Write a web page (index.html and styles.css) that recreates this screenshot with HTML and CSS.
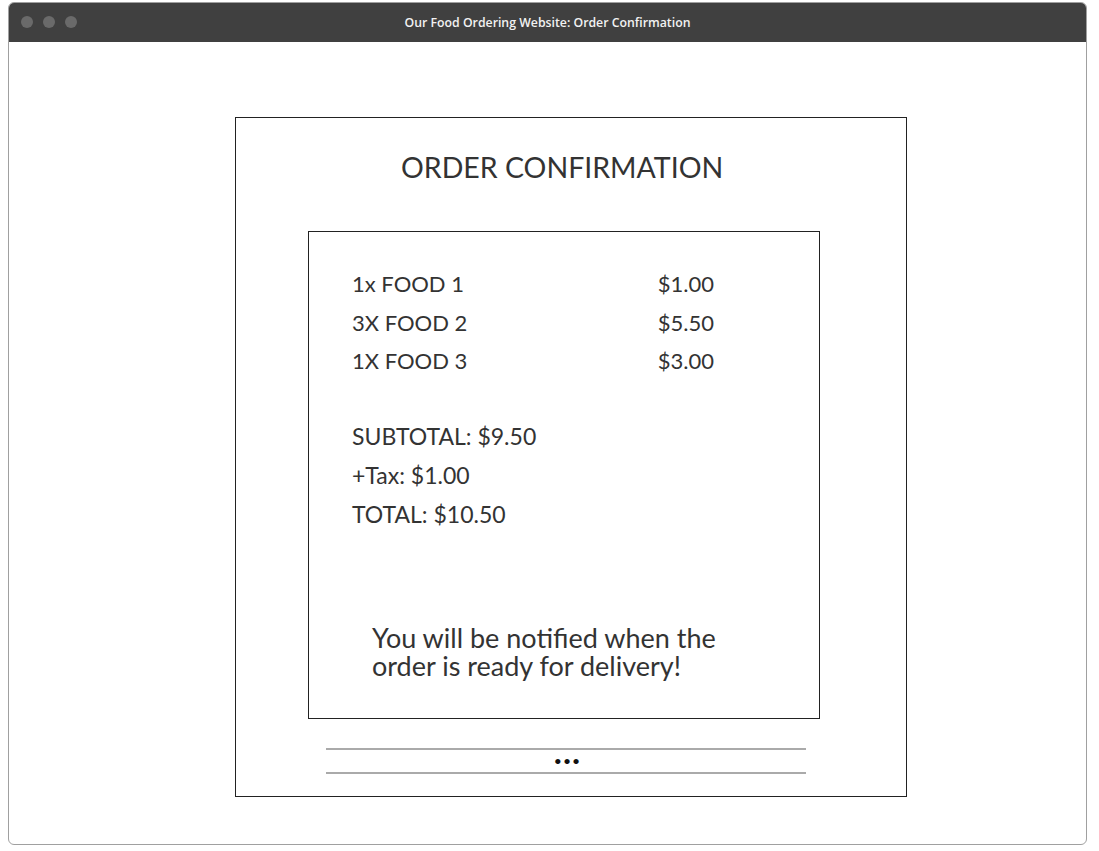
FILE: index.html
```html
<!DOCTYPE html>
<html>
<head>
<meta charset="utf-8">
<link rel="stylesheet" href="styles.css">
</head>
<body>
<div class="window">
  <div class="titlebar">
    <div class="dots"><span></span><span></span><span></span></div>
    <div class="title">Our Food Ordering Website: Order Confirmation</div>
  </div>
  <div class="content">
    <div class="outer">
      <h1 class="heading">ORDER CONFIRMATION</h1>
      <div class="inner">
        <div class="items">
          <div class="row"><span>1x FOOD 1</span><span>$1.00</span></div>
          <div class="row"><span>3X FOOD 2</span><span>$5.50</span></div>
          <div class="row"><span>1X FOOD 3</span><span>$3.00</span></div>
        </div>
        <div class="summary">
          <div class="line">SUBTOTAL: $9.50</div>
          <div class="line">+Tax: $1.00</div>
          <div class="line">TOTAL: $10.50</div>
        </div>
        <p class="message">You will be notified when the<br>order is ready for delivery!</p>
      </div>
      <div class="pager"><span class="more">&bull;&bull;&bull;</span></div>
    </div>
  </div>
</div>
</body>
</html>
```
FILE: styles.css
```css
html, body { margin: 0; padding: 0; background: #fff; }
body { font-family: "Lato", "Noto Sans", sans-serif; color: #333; }
.window {
  margin: 2px 0 0 8px;
  width: 1077px;
  height: 841px;
  border: 1px solid #a0a0a0;
  border-radius: 6px;
  overflow: hidden;
  display: flex;
  flex-direction: column;
}
.titlebar {
  height: 39px;
  background: #404040;
  position: relative;
  display: flex;
  align-items: center;
  justify-content: center;
  flex-shrink: 0;
}
.dots { position: absolute; left: 12px; top: 13px; display: flex; gap: 10px; }
.dots span { width: 12px; height: 12px; border-radius: 50%; background: #6a6a6a; display: block; }
.title { color: #f2f2f2; font-size: 12.3px; font-weight: 600; font-family: "Open Sans", sans-serif; }
.content { display: flex; justify-content: flex-start; padding-top: 75px; padding-left: 226px; }
.outer {
  width: 670px;
  height: 678px;
  border: 1px solid #222;
  display: flex;
  flex-direction: column;
  align-items: flex-start;
}
.heading {
  margin: 29px 0 0 165px;
  font-weight: 400;
  font-size: 28.5px;
  line-height: 40px;
  color: #333;
  letter-spacing: 0;
}
.inner {
  margin: 44px 0 0 72px;
  width: 510px;
  height: 486px;
  border: 1px solid #222;
  display: flex;
  flex-direction: column;
}
.items { margin: 33px 0 0 43px; width: 362px; }
.row { display: flex; justify-content: space-between; font-size: 22px; line-height: 38.5px; }
.summary { margin: 36px 0 0 43px; }
.line { font-size: 23px; line-height: 39px; }
.message { margin: 90px 0 0 63px; font-size: 27px; line-height: 28px; }
.pager {
  margin: 29px 0 0 90px;
  padding-left: 3px;
  box-sizing: border-box;
  width: 480px;
  height: 26px;
  border-top: 2px solid #aaa;
  border-bottom: 2px solid #aaa;
  display: flex;
  align-items: center;
  justify-content: center;
}
.more { font-size: 14px; letter-spacing: 1px; color: #111; line-height: 1; }
```
